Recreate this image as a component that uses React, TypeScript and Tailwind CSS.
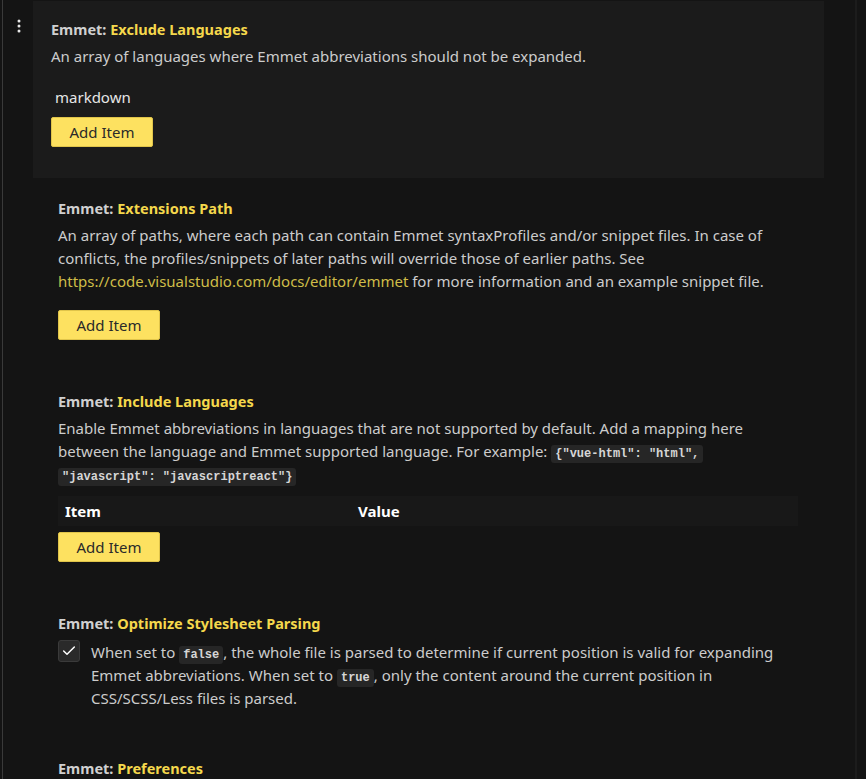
import React from 'react';
import { Check } from 'lucide-react';

const FONT = { fontFamily: '"Noto Sans", "Open Sans", sans-serif' };

const Code: React.FC<{ children: React.ReactNode }> = ({ children }) => (
  <code className="rounded-[3px] bg-[#262626] px-[4px] py-[2px] font-['Liberation_Mono',monospace] text-[12px] leading-none font-bold text-[#d6d6d6]">
    {children}
  </code>
);

const Title: React.FC<{ name: string }> = ({ name }) => (
  <div className="h-[20px] text-[14.5px] font-bold leading-[20px] text-[#d0d0d0]">
    Emmet: <span className="text-[#f5d84c]">{name}</span>
  </div>
);

const AddButton = () => (
  <button className="h-[30px] w-[102px] rounded-[2px] border border-[#e0c44a] bg-[#fde160] text-[15px] text-[#2a2a2a]">
    Add Item
  </button>
);

const Dots = () => (
  <svg width="6" height="14" viewBox="0 0 6 14" className="text-[#e8e8e8]">
    <circle cx="3" cy="2" r="1.5" fill="currentColor" />
    <circle cx="3" cy="7" r="1.5" fill="currentColor" />
    <circle cx="3" cy="12" r="1.5" fill="currentColor" />
  </svg>
);

export default function App() {
  return (
    <div style={FONT} className="flex h-[779px] w-[866px] overflow-hidden bg-[#141414] text-[#cccccc]">
      {/* editor edge */}
      <div className="ml-[2px] w-[1px] bg-[#3a3a3a]" />

      <div className="flex w-[821px] flex-col">
        {/* focused item */}
        <div className="mt-[1px] flex">
          <div className="flex w-[30px] justify-center pt-[18px] pl-[2px]">
            <Dots />
          </div>
          <div className="flex-1 bg-[#1b1b1b] pl-[18px] pt-[18px] pb-[31px]">
            <Title name="Exclude Languages" />
            <div className="mt-[6px] text-[15px] leading-[23px]">
              An array of languages where Emmet abbreviations should not be expanded.
            </div>
            <div className="mt-[16px] flex h-[26px] items-center pl-[4px] text-[15px] text-[#e6e6e6]">markdown</div>
            <div className="mt-[7px]">
              <AddButton />
            </div>
          </div>
        </div>

        {/* extensions path */}
        <div className="mt-[2px] pl-[55px] pt-[18px] pb-[31px]">
          <Title name="Extensions Path" />
          <div className="mt-[6px] whitespace-nowrap text-[15px] leading-[23px]">
            An array of paths, where each path can contain Emmet syntaxProfiles and/or snippet files. In case of
            <br />
            conflicts, the profiles/snippets of later paths will override those of earlier paths. See
            <br />
            <span className="text-[#cfbd48]">https://code.visualstudio.com/docs/editor/emmet</span> for more information and an example snippet file.
          </div>
          <div className="mt-[17px]">
            <AddButton />
          </div>
        </div>

        {/* include languages */}
        <div className="mt-[2px] pl-[55px] pt-[18px] pb-[31px]">
          <Title name="Include Languages" />
          <div className="mt-[6px] whitespace-nowrap text-[15px] leading-[23px]">
            Enable Emmet abbreviations in languages that are not supported by default. Add a mapping here
            <br />
            between the language and Emmet supported language. For example: <Code>{'{"vue-html": "html",'}</Code>
            <br />
            <Code>{'"javascript": "javascriptreact"}'}</Code>
          </div>
          <div className="mt-[10px] flex h-[30px] w-[740px] items-center bg-[#181818] text-[15px] font-bold text-white">
            <div className="w-[300px] pl-[7px]">Item</div>
            <div>Value</div>
          </div>
          <div className="mt-[6px]">
            <AddButton />
          </div>
        </div>

        {/* optimize stylesheet parsing */}
        <div className="mt-[2px] pl-[55px] pt-[18px] pb-[31px]">
          <Title name="Optimize Stylesheet Parsing" />
          <div className="mt-[7px] flex gap-[11px]">
            <div className="flex h-[22px] w-[22px] shrink-0 items-center justify-center rounded-[3px] border border-[#3a3a3a] bg-[#2a2a2a]">
              <Check size={16} strokeWidth={2.2} className="text-white" />
            </div>
            <div className="mt-[1px] whitespace-nowrap text-[15px] leading-[23px]">
              When set to <Code>false</Code>, the whole file is parsed to determine if current position is valid for expanding
              <br />
              Emmet abbreviations. When set to <Code>true</Code>, only the content around the current position in
              <br />
              CSS/SCSS/Less files is parsed.
            </div>
          </div>
        </div>

        {/* preferences */}
        <div className="mt-[2px] pl-[55px] pt-[15px]">
          <Title name="Preferences" />
        </div>
      </div>

      {/* scrollbar track */}
      <div className="ml-[31px] w-[2px] bg-[#1c1c1c]" />
    </div>
  );
}
